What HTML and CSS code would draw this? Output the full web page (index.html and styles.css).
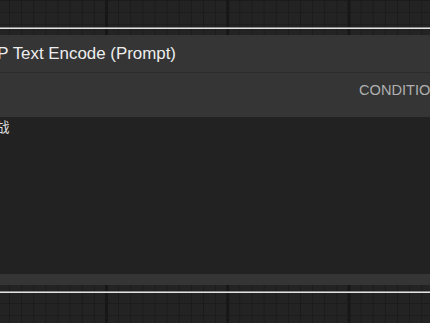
FILE: index.html
```html
<!DOCTYPE html>
<html lang="zh">
<head>
<meta charset="utf-8">
<title>CLIP Text Encode (Prompt)</title>
<link rel="stylesheet" href="styles.css">
</head>
<body>
<div class="top-band"></div>
<div class="selection">
  <div class="selection-inner">
    <div class="node">
      <div class="node-header"><span class="node-title">CLIP Text Encode (Prompt)</span></div>
      <div class="slot-row"><span class="slot-label">CONDITIONING</span></div>
      <div class="prompt-area"><span class="prompt-text">战</span></div>
      <div class="node-footer"></div>
    </div>
  </div>
</div>
<div class="bottom-band"></div>
</body>
</html>
```
FILE: styles.css
```css
html, body {
  margin: 0;
  padding: 0;
}
body {
  width: 430px;
  height: 323px;
  overflow: hidden;
  background-color: #232323;
  background-image:
    linear-gradient(to right, #171717 3px, transparent 3px),
    linear-gradient(to right, #1b1b1b 1px, transparent 1px),
    linear-gradient(to bottom, #1b1b1b 1px, transparent 1px);
  background-size: 121.25px 100%, 12.125px 12.125px, 12.125px 12.125px;
  background-position: 105px 0, 9px 0, 0 0;
  font-family: "Liberation Sans", Arial, sans-serif;
}
.top-band {
  height: 27px;
}
.selection {
  border-top: 1px solid #8a8a8a;
  border-bottom: 1px solid #e4e4e4;
}
.selection-inner {
  border-top: 1px solid #e4e4e4;
  border-bottom: 1px solid #8a8a8a;
  padding: 6px 0;
}
.node {
  background: #353535;
}
.node-header {
  height: 37px;
  border-bottom: 1px solid #2b2b2b;
  white-space: nowrap;
  overflow: hidden;
}
.node-title {
  display: block;
  margin-left: -29px;
  font-size: 16.9px;
  line-height: 37px;
  color: #eeeeee;
}
.slot-row {
  height: 44px;
  box-sizing: border-box;
  padding: 8px 0 0 359px;
  white-space: nowrap;
  overflow: hidden;
}
.slot-label {
  font-size: 14.6px;
  line-height: 17px;
  color: #b0b0b0;
}
.prompt-area {
  height: 157px;
  background: #222222;
  overflow: hidden;
}
.prompt-text {
  display: block;
  margin-left: -4.5px;
  font-family: "Noto Sans CJK SC", sans-serif;
  font-size: 14px;
  line-height: 18px;
  color: #dddddd;
}
.node-footer {
  height: 11px;
  background: #353535;
}
.bottom-band {
  height: 30px;
}
```
